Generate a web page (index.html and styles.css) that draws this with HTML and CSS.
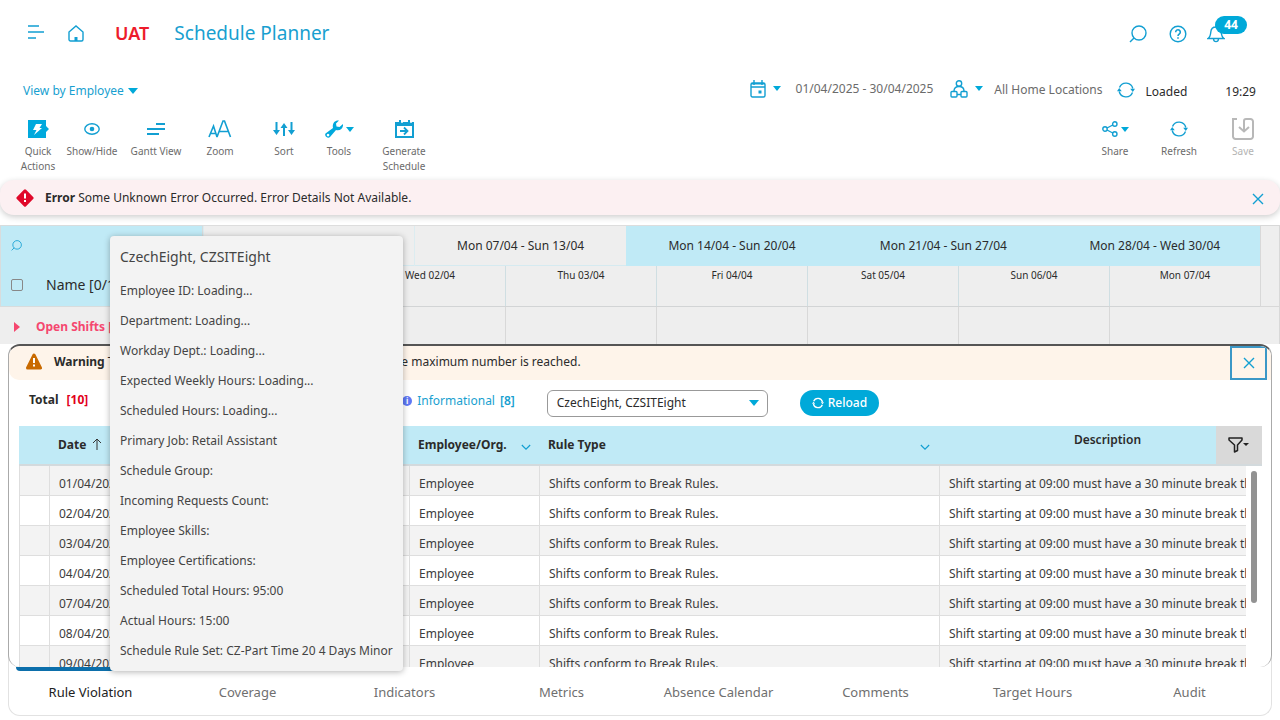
FILE: index.html
```html
<!DOCTYPE html>
<html lang="en">
<head>
<meta charset="utf-8">
<meta name="viewport" content="width=device-width, initial-scale=1">
<title>Schedule Planner</title>
<link rel="stylesheet" href="styles.css">
</head>
<body>
<svg class="sprite" aria-hidden="true">
  <symbol id="i-loop" viewBox="0 0 18 18"><path d="M2.500 6.500A7 7 0 0 1 15.800 7.500M15.500 11.500A7 7 0 0 1 2.200 10.500"/><path d="M13.200 7.800H18l-2.200 3.200zM0 10.200h4.800L2.200 7z" fill="currentColor" stroke="none"/></symbol>
  <symbol id="i-search" viewBox="0 0 18 18"><circle cx="10" cy="8" r="7"/><path d="M5 13l-4 4"/></symbol>
  <symbol id="i-close" viewBox="0 0 12 12"><path d="M1 1l10 10M11 1L1 11"/></symbol>
  <symbol id="i-down" viewBox="0 0 12 8"><path d="M1 1l5 5 5-5"/></symbol>
</svg>

<header class="topbar">
  <button class="icon-btn menu" aria-label="Menu"><svg class="ic" width="18" height="14" viewBox="0 0 18 14"><path d="M1 1h11M1 7h16M1 13h8" stroke-width="1.400"/></svg></button>
  <a class="home" href="#" aria-label="Home"><svg class="ic" width="16" height="17" viewBox="0 0 16 17"><path d="M1 7L8 1l7 6v7.500a1.500 1.500 0 0 1-1.500 1.500h-11A1.500 1.500 0 0 1 1 14.500z"/><path d="M6.500 12h3v4h-3z" fill="currentColor" stroke="none"/></svg></a>
  <strong class="env">UAT</strong>
  <h1 class="title">Schedule Planner</h1>
  <div class="top-actions">
    <button class="icon-btn" aria-label="Search"><svg class="ic" width="18" height="18"><use href="#i-search"/></svg></button>
    <button class="icon-btn" aria-label="Help"><svg class="ic" width="18" height="18" viewBox="0 0 18 18"><circle cx="9" cy="9" r="7.800"/><path d="M6.700 7.200a2.300 2.300 0 1 1 3.700 1.700C9.500 9.600 9 10 9 11M9 12.300v1.400" stroke-width="1.600"/></svg></button>
    <button class="icon-btn bell" aria-label="Notifications"><svg class="ic" width="18" height="18" viewBox="0 0 18 18"><path d="M1 13.500c2-1.200 2.500-2.500 2.800-6.500C4 4 6 2 9 2s5 2 5.200 5c.3 4 .8 5.300 2.800 6.500zM9 2V.5M6.500 14c.3 3.500 4.700 3.500 5 0"/></svg><span class="badge">44</span></button>
  </div>
</header>

<div class="context">
  <button class="view-by">View by Employee <i class="caret"></i></button>
  <div class="context-right">
    <button class="pick" aria-label="Choose dates"><svg class="ic" width="16" height="18" viewBox="0 0 16 18"><rect x="1" y="3" width="14" height="14" rx="1.500"/><path d="M1 7h14M4 0v5M12 0v5"/><path d="M1 3h14v1.500H1zM8.500 10.500h3v3h-3z" fill="currentColor" stroke="none"/></svg><i class="caret small"></i></button>
    <span class="range">01/04/2025 - 30/04/2025</span>
    <button class="pick" aria-label="Choose locations"><svg class="ic" width="18" height="18" viewBox="0 0 18 18" stroke-width="1.600"><circle cx="9" cy="3.500" r="2.700"/><path d="M4 11c0-3 2-4.500 5-4.500s5 1.500 5 4.500M7 14.500h4"/><rect x="1" y="11.500" width="6" height="5.500" rx="1"/><rect x="11" y="11.500" width="6" height="5.500" rx="1"/></svg><i class="caret small"></i></button>
    <span class="locations">All Home Locations</span>
    <svg class="ic loop" width="18" height="18"><use href="#i-loop"/></svg>
    <span class="status">Loaded</span>
    <time class="clock">19:29</time>
  </div>
</div>

<nav class="tools" aria-label="Actions">
  <button class="tool quick"><span class="tool-ic"><svg width="22" height="18" viewBox="0 0 22 18"><path fill="#00a9dd" d="M1 0h18v6l3 3-3 3v6H1z"/><path fill="#fff" d="M9 4h6l-2.500 4H15l-8 7 2.500-5H6z"/></svg></span>Quick Actions</button>
  <button class="tool"><span class="tool-ic"><svg class="ic" width="16" height="12" viewBox="0 0 16 12"><ellipse cx="8" cy="6" rx="7.200" ry="5.200"/><circle cx="8" cy="6" r="2.300" fill="currentColor" stroke="none"/></svg></span>Show/Hide</button>
  <button class="tool"><span class="tool-ic"><svg class="ic" width="18" height="14" viewBox="0 0 18 14"><path d="M9 2h9M0 7h18M0 12h12" stroke-width="2"/></svg></span>Gantt View</button>
  <button class="tool"><span class="tool-ic"><svg class="ic" width="24" height="18" viewBox="0 0 24 18"><path d="M1 17L5.500 6 9 17M2.500 13.500h5.500M9 17l6-16h1.500l6 16M11.500 11.500h8.500" stroke-width="1.600"/></svg></span>Zoom</button>
  <button class="tool"><span class="tool-ic"><svg class="ic" width="22" height="16" viewBox="0 0 22 16"><path d="M3.500 1v10M11 5v10M18.500 1v10" stroke-width="2"/><path d="M0 9h7l-3.500 5zM7.500 7h7L11 2zM15 9h7l-3.500 5z" fill="currentColor" stroke="none"/></svg></span>Sort</button>
  <button class="tool narrow"><span class="tool-ic"><svg width="18" height="18" viewBox="0 0 18 18"><path fill="#00a9dd" fill-rule="evenodd" d="M14 .5l-3 3 .5 3 3 .5L18 4c.5 4-2.500 7-7 6l-6 7c-2 2-6-1-4.500-3.500L8 8C7 3.500 9.500 0 14 .5zM3 13.800a1.300 1.300 0 1 0 .1 0z"/></svg><i class="caret small"></i></span>Tools</button>
  <button class="tool wide"><span class="tool-ic"><svg class="ic" width="19" height="18" viewBox="0 0 19 18"><path d="M1 3h17v14H1z" stroke-width="2"/><path d="M1 3h17v3H1zM4 0h2v3H4zM13 0h2v3h-2z" fill="currentColor" stroke="none"/><path d="M7 0v3M16 0v3" stroke="#fff"/><path d="M5 11h7M9 7.500l3.500 3.500L9 14.500" stroke-width="1.800"/></svg></span>Generate Schedule</button>
  <span class="spacer"></span>
  <button class="tool"><span class="tool-ic"><svg class="ic" width="16" height="16" viewBox="0 0 16 16"><circle cx="3" cy="8" r="2.200"/><circle cx="12.800" cy="3" r="2.200"/><circle cx="12.800" cy="13" r="2.200"/><path d="M5 7l5.800-3M5 9l5.800 3"/></svg><i class="caret small"></i></span>Share</button>
  <button class="tool"><span class="tool-ic"><svg class="ic" width="18" height="18"><use href="#i-loop"/></svg></span>Refresh</button>
  <button class="tool" disabled><span class="tool-ic"><svg class="ic" width="22" height="22" viewBox="0 0 22 22"><path d="M5 1H1v17.500A2.500 2.500 0 0 0 3.500 21h15a2.500 2.500 0 0 0 2.500-2.500v-15A2.500 2.500 0 0 0 18.500 1H14q-2 0-2 2v10M7 9l5 4.500L17 9" stroke-width="2"/></svg></span>Save</button>
</nav>

<div class="alert error" role="alert">
  <svg width="18" height="18" viewBox="0 0 18 18"><rect x="2.500" y="2.500" width="13" height="13" rx="1.500" transform="rotate(45 9 9)" fill="#e0082a"/><path d="M8 4.500h2v5H8zM8 11h2v2H8z" fill="#fff"/></svg>
  <p><strong>Error</strong> Some Unknown Error Occurred. Error Details Not Available.</p>
  <button class="icon-btn" aria-label="Dismiss"><svg class="ic" width="12" height="12"><use href="#i-close"/></svg></button>
</div>

<section class="schedule">
  <div class="people">
    <div class="people-search"><svg class="ic" width="11" height="11"><use href="#i-search"/></svg></div>
    <label class="people-name"><input type="checkbox"><span>Name [0/1]</span></label>
  </div>
  <div class="timeline">
    <div class="weeks">
      <span>Tue 01/04 - Sun 06/04</span><span>Mon 07/04 - Sun 13/04</span><span class="on">Mon 14/04 - Sun 20/04</span><span class="on">Mon 21/04 - Sun 27/04</span><span class="on">Mon 28/04 - Wed 30/04</span>
    </div>
    <div class="days">
      <span>Tue 01/04</span><span>Wed 02/04</span><span>Thu 03/04</span><span>Fri 04/04</span><span>Sat 05/04</span><span>Sun 06/04</span><span>Mon 07/04</span>
    </div>
  </div>
  <div class="gutter"></div>
  <div class="open-shifts"><i class="expand"></i>Open Shifts [0]</div>
  <div class="shift-cells"><span></span><span></span><span></span><span></span><span></span><span></span><span></span></div>
  <div class="gutter low"></div>
</section>

<section class="panel">
  <div class="panel-body">
    <div class="alert warning">
      <svg width="18" height="17" viewBox="0 0 18 17"><path d="M9 2l6.500 13h-13z" fill="#c96a00" stroke="#c96a00" stroke-width="3" stroke-linejoin="round"/><path d="M8 5h2v5H8zM8 11.500h2v2H8z" fill="#fff"/></svg>
      <p><strong>Warning</strong> The system stops reporting extra rule violations if the maximum number is reached.</p>
      <button class="icon-btn focused" aria-label="Close panel"><svg class="ic" width="12" height="12"><use href="#i-close"/></svg></button>
    </div>
    <div class="filters">
      <span class="total">Total</span><span class="count">[10]</span>
      <a class="info" href="#"><i class="info-dot">i</i>Informational <b>[8]</b></a>
      <div class="select-wrap"><select aria-label="Employee"><option>CzechEight, CZSITEight</option></select><i class="caret"></i></div>
      <button class="reload"><svg class="ic" width="12" height="12"><use href="#i-loop"/></svg>Reload</button>
    </div>
    <div class="results">
      <table>
        <thead>
          <tr>
            <th class="c-mark"></th><th class="c-date">Date <svg class="sort" width="10" height="12" viewBox="0 0 10 12"><path d="M5 12V1M1 5l4-4 4 4"/></svg></th><th class="c-mid"></th>
            <th class="c-emp"><div class="th">Employee/Org.<svg class="ic" width="10" height="7"><use href="#i-down"/></svg></div></th>
            <th class="c-rule"><div class="th">Rule Type<svg class="ic" width="10" height="7"><use href="#i-down"/></svg></div></th>
            <th class="c-desc">Description</th>
            <th class="c-filter"><button class="filter" aria-label="Filter"><svg width="22" height="16" viewBox="0 0 22 16"><path d="M1 1h13v2L9.500 8v5.500l-3 1.500V8L1 3z" fill="none" stroke="#222" stroke-width="1.500" stroke-linejoin="round"/><path d="M15 6h6l-3 3z" fill="#222"/></svg></button></th>
          </tr>
        </thead>
      </table>
      <div class="rows">
        <table>
          <tbody>
            <tr><td class="c-mark"></td><td class="c-date">01/04/2025</td><td class="c-mid"></td><td class="c-emp">Employee</td><td class="c-rule">Shifts conform to Break Rules.</td><td class="c-desc">Shift starting at 09:00 must have a 30 minute break that starts</td></tr>
            <tr><td></td><td>02/04/2025</td><td></td><td>Employee</td><td>Shifts conform to Break Rules.</td><td>Shift starting at 09:00 must have a 30 minute break that starts</td></tr>
            <tr><td></td><td>03/04/2025</td><td></td><td>Employee</td><td>Shifts conform to Break Rules.</td><td>Shift starting at 09:00 must have a 30 minute break that starts</td></tr>
            <tr><td></td><td>04/04/2025</td><td></td><td>Employee</td><td>Shifts conform to Break Rules.</td><td>Shift starting at 09:00 must have a 30 minute break that starts</td></tr>
            <tr><td></td><td>07/04/2025</td><td></td><td>Employee</td><td>Shifts conform to Break Rules.</td><td>Shift starting at 09:00 must have a 30 minute break that starts</td></tr>
            <tr><td></td><td>08/04/2025</td><td></td><td>Employee</td><td>Shifts conform to Break Rules.</td><td>Shift starting at 09:00 must have a 30 minute break that starts</td></tr>
            <tr><td></td><td>09/04/2025</td><td></td><td>Employee</td><td>Shifts conform to Break Rules.</td><td>Shift starting at 09:00 must have a 30 minute break that starts</td></tr>
          </tbody>
        </table>
        <div class="track"><div class="thumb"></div></div>
      </div>
    </div>
  </div>
  <nav class="tabs" aria-label="Panels">
    <button class="tab active">Rule Violation</button><button class="tab">Coverage</button><button class="tab">Indicators</button><button class="tab">Metrics</button><button class="tab">Absence Calendar</button><button class="tab">Comments</button><button class="tab">Target Hours</button><button class="tab">Audit</button>
  </nav>
</section>

<div class="tooltip" role="tooltip">
  <h2>CzechEight, CZSITEight</h2>
  <p>Employee ID: Loading...</p>
  <p>Department: Loading...</p>
  <p>Workday Dept.: Loading...</p>
  <p>Expected Weekly Hours: Loading...</p>
  <p>Scheduled Hours: Loading...</p>
  <p>Primary Job: Retail Assistant</p>
  <p>Schedule Group:</p>
  <p>Incoming Requests Count:</p>
  <p>Employee Skills:</p>
  <p>Employee Certifications:</p>
  <p>Scheduled Total Hours: 95:00</p>
  <p>Actual Hours: 15:00</p>
  <p>Schedule Rule Set: CZ-Part Time 20 4 Days Minor</p>
</div>
</body>
</html>
```
FILE: styles.css
```css
:root {
  --blue: #00a9d9;
  --sky: #c0eaf6;
  --grey: #eee;
  --ink: #2b2b2b;
}
* { box-sizing: border-box; }
body {
  margin: 0;
  padding-bottom: 4px;
  height: 100vh;
  display: flex;
  flex-direction: column;
  overflow: hidden;
  background: #fff;
  color: var(--ink);
  font: 12px/18px "Noto Sans", sans-serif;
}
button, select { font: inherit; color: inherit; background: none; border: 0; padding: 0; margin: 0; }
h1, h2, p { margin: 0; font-weight: 400; }
a { color: #189fd0; text-decoration: none; }
svg { display: block; flex: none; }
.sprite { position: absolute; width: 0; height: 0; }
.ic { color: #129fd2; fill: none; stroke: currentColor; stroke-width: 1.4; }
.icon-btn { display: flex; align-items: center; justify-content: center; }
.spacer { flex: 1; }
.caret { display: inline-block; border: 5px solid transparent; border-top: 6px solid var(--blue); border-bottom: 0; }
.caret.small { border-width: 4px; border-top-width: 5px; border-bottom: 0; }

/* Top bar */
.topbar { display: flex; align-items: center; height: 66px; padding: 0 40px 0 27px; flex: none; }
.menu { padding-bottom: 2px; }
.home { margin-left: 23px; }
.env { margin-left: 31px; color: #ed1c2b; font-size: 18px; font-weight: 600; }
.title { margin-left: 25px; color: #189fd0; font-size: 19px; }
.top-actions { display: flex; gap: 22px; margin-left: auto; padding: 2px 15px 0 0; }
.top-actions .bell { margin-left: -2px; }
.bell { position: relative; }
.badge {
  position: absolute; left: 8px; top: -9px;
  width: 32px; border-radius: 9px;
  background: var(--blue); color: #fff; font-weight: 700; text-align: center;
}

/* Context row */
.context { display: flex; align-items: center; justify-content: space-between; height: 48px; padding: 0 24px 0 23px; flex: none; }
.view-by { display: flex; align-items: center; gap: 4px; padding-top: 2px; color: #189fd0; }
.context-right { display: flex; align-items: center; color: #6b6b6b; }
.pick { display: flex; align-items: center; gap: 7px; padding-bottom: 3px; }
.range { margin: 0 17px 0 15px; padding-bottom: 2px; }
.locations { margin: 0 14px 0 11px; }
.status { margin-left: 11px; padding-top: 4px; color: var(--ink); }
.clock { margin-left: 38px; padding-top: 4px; color: var(--ink); }

/* Action tools */
.tools { display: flex; padding: 2px 5px 0 16px; height: 66px; flex: none; }
.tool {
  display: flex; flex-direction: column; align-items: center;
  width: 64px; height: 60px;
  color: #6b6b6b; font-size: 10px; line-height: 15px; text-align: center;
}
.tool-ic { display: flex; align-items: center; justify-content: center; gap: 3px; height: 26px; margin-bottom: 2px; }
.tool.quick { width: 44px; }
.tool.narrow { width: 46px; }
.tool.wide { width: 84px; padding: 0 18px; }
.tool:disabled { color: #b3b3b3; }
.tool:disabled .ic { color: #b8b8b8; }

/* Alerts */
.alert { display: flex; align-items: center; flex: none; }
.alert p { flex: 1; white-space: nowrap; }
.error {
  height: 35px; padding: 0 16px; gap: 11px;
  background: #fcf0f2; border-radius: 14px;
  box-shadow: 0 2px 6px rgba(0, 0, 0, .2);
}
.error .icon-btn { padding-top: 3px; }

/* Schedule grid */
.schedule {
  display: grid;
  grid-template-columns: 203px 1fr 19px;
  grid-template-rows: 82px 37px;
  margin-top: 10px;
  background: var(--grey);
  border-right: 1px solid #d8d8d8;
  flex: none;
}
.people { background: var(--sky); border: 1px solid #d8dcdd; display: flex; flex-direction: column; }
.people-search { height: 38px; padding-left: 10px; display: flex; align-items: center; }
.people-name { flex: 1; display: flex; align-items: center; gap: 23px; padding-left: 10px; font-size: 14px; }
.people-name input { appearance: none; width: 12px; height: 12px; margin: 0; border: 1px solid #888; border-radius: 2px; }
.weeks { display: grid; grid-template-columns: repeat(5, 1fr); height: 41px; line-height: 40px; text-align: center; border-top: 1px solid #ddd; border-bottom: 1px solid #d5eaf0; }
.weeks span { border-left: 1px solid #dcecf0; }
.weeks .on { background: var(--sky); border-color: var(--sky); }
.days, .shift-cells { display: grid; grid-template-columns: repeat(7, 1fr); }
.days { height: 41px; font-size: 10px; text-align: center; border-bottom: 1px solid #d2d4d5; }
.days span + span { border-left: 1px solid #cfdee2; }
.gutter { border: 1px solid #d8d8d8; border-right: 0; }
.gutter.low { border: 0; }
.open-shifts { display: flex; align-items: center; gap: 16px; padding: 3px 0 0 14px; color: #f5476f; font-weight: 700; }
.expand { border: 5px solid transparent; border-left-color: #f5476f; border-left-width: 6px; border-right: 0; }
.shift-cells span + span { border-left: 1px solid #d8d8d8; }

/* Bottom panel */
.panel {
  flex: 1; min-height: 0;
  display: flex; flex-direction: column;
  margin: 0 8px;
  border: 1px solid #e2e2e2; border-top: 0;
  border-radius: 12px;
}
.panel-body {
  flex: 1; min-height: 0;
  display: flex; flex-direction: column;
  margin: 0 -1px;
  border: 1px solid #aaa; border-top: 2px solid #555; border-bottom: 0;
  border-radius: 12px;
  overflow: hidden;
}
.warning { height: 34px; padding: 0 4px 0 16px; gap: 11px; background: #fef4ea; border-radius: 10px 0 0 10px; }
.warning > svg, .warning p { margin-bottom: 3px; }
.focused { width: 37px; height: 34px; border: 2px solid #3b97c6; }
.filters { display: flex; align-items: center; height: 46px; padding: 0 20px; flex: none; }
.total, .count { padding-bottom: 6px; font-weight: 700; }
.count { margin-left: 8px; color: #e2001a; }
.info { display: flex; align-items: center; gap: 5px; margin-left: 314px; padding-bottom: 4px; }
.info b { font-weight: 600; }
.info-dot { width: 10px; height: 10px; border-radius: 5px; background: #5f78f5; color: #fff; font: 700 8px/10px "Noto Sans", sans-serif; text-align: center; }
.select-wrap { position: relative; margin-left: 32px; }
.select-wrap select { display: block; appearance: none; width: 221px; height: 27px; padding: 0 9px; border: 1px solid #999; border-radius: 6px; }
.select-wrap .caret { position: absolute; right: 9px; top: 10px; pointer-events: none; }
.reload { display: flex; align-items: center; gap: 4px; height: 26px; margin-left: 32px; padding: 0 12px; border-radius: 13px; background: var(--blue); color: #fff; font-weight: 500; }
.reload .ic { color: #fff; stroke-width: 2; }

/* Results table */
.results { flex: 1; min-height: 0; display: flex; flex-direction: column; margin: 0 9px 0 10px; }
table { width: 100%; table-layout: fixed; border-collapse: separate; border-spacing: 0; }
th, td { padding: 0 9px; text-align: left; white-space: nowrap; overflow: hidden; }
th { height: 40px; background: var(--sky); font-weight: 700; border-bottom: 2px solid #d3dadd; }
td { height: 30px; padding-top: 6px; border-left: 1px solid #dedede; border-bottom: 1px solid #dedede; color: #3c3c3c; }
tr:nth-child(odd) td { background: #f3f3f3; }
.c-mark { width: 30px; }
.c-date { width: 100px; }
.c-mid { width: 260px; }
.c-emp { width: 130px; }
.c-rule { width: 400px; }
th.c-desc { padding: 0 0 10px 60px; text-align: center; font-weight: 600; }
th.c-filter { width: 46px; padding: 0; background: #d9d9d9; }
.th { display: flex; align-items: center; justify-content: space-between; }
.th .ic { margin-top: 4px; }
th.c-emp { padding-right: 8px; }
.sort { display: inline-block; margin-left: 3px; fill: none; stroke: #333; vertical-align: -1px; }
.filter { display: flex; width: 100%; justify-content: center; }
.rows { display: flex; flex: 1; min-height: 0; overflow: hidden; }
.rows table { flex: 1; width: 0; height: max-content; }
.rows td:last-child { padding-right: 0; }
.track { width: 16px; padding: 5px 5px 0; }
.thumb { width: 6px; height: 132px; border-radius: 3px; background: #929292; }

/* Tabs */
.tabs { display: grid; grid-template-columns: repeat(8, 1fr); height: 48px; padding: 0 3px; flex: none; }
.tab { position: relative; padding-top: 1px; color: #6f6f6f; font-size: 13px; }
.tab.active { color: #222; }
.tab.active::before { content: ""; position: absolute; left: 4px; right: 7px; top: 0; height: 4px; border-radius: 0 0 4px 4px; background: #0c6fab; }

/* Employee tooltip */
.tooltip {
  position: absolute; left: 110px; top: 236px;
  padding: 6px 10px 5px;
  background: #f3f3f3; color: #444;
  border-radius: 4px;
  box-shadow: 0 1px 6px rgba(0, 0, 0, .3);
  line-height: 30px; white-space: nowrap;
}
.tooltip h2 { margin-bottom: 4px; font-size: 14px; }
```
